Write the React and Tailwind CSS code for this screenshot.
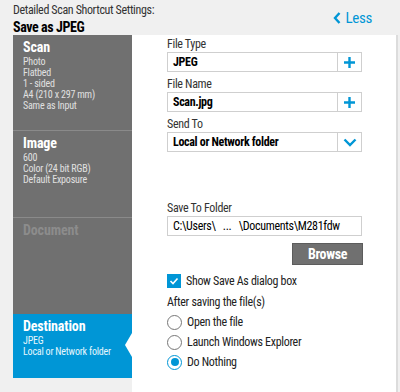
const font = { fontFamily: '"Roboto Condensed", "DejaVu Sans Condensed", sans-serif' };

const Plus = () => (
  <svg width="13" height="13" viewBox="0 0 13 13">
    <path d="M6.5 1v11M1 6.5h11" stroke="#0096d6" strokeWidth="2.4" />
  </svg>
);

const Chevron = () => (
  <svg width="14" height="9" viewBox="0 0 14 9">
    <path d="M1.5 1.5l5.5 5.5 5.5-5.5" fill="none" stroke="#0096d6" strokeWidth="2.4" />
  </svg>
);

const Field = ({ label, value, bold = true, icon, className = "" }) => (
  <div className={`flex flex-col ${className}`}>
    <div className="h-[16px] flex items-center text-[12px] text-[#333]">{label}</div>
    <div className="w-[195px] h-[20px] border border-[#cfcfcf] flex items-stretch bg-white">
      <div className={`flex-1 flex items-center px-[5px] text-[12px] text-black ${bold ? "font-bold" : ""}`}>{value}</div>
      {icon && (
        <div className="w-[24px] border-l border-[#cfcfcf] flex items-center justify-center">{icon}</div>
      )}
    </div>
  </div>
);

const Radio = ({ label, checked }) => (
  <div className="h-[20px] flex items-center gap-[5px]">
    <div className={`w-[15px] h-[15px] rounded-full border-[1.5px] flex items-center justify-center bg-white ${checked ? "border-[#0096d6]" : "border-[#777]"}`}>
      {checked && <div className="w-[8px] h-[8px] rounded-full bg-[#0096d6]" />}
    </div>
    <span className="text-[12px] text-[#222]">{label}</span>
  </div>
);

const Section = ({ title, items = [], h, muted, active, divider = true }) => (
  <div
    className={`relative flex flex-col pl-[10px] pt-[4px] ${active ? "bg-[#0096d6]" : "bg-[#707070]"} ${divider ? "border-b border-[#8a8a8a]" : ""}`}
    style={{ height: h }}
  >
    <div className={`text-[14px] font-bold leading-[17px] tracking-[-0.01em] ${muted ? "text-[#8c8c8c]" : "text-white"}`}>{title}</div>
    {items.map((t) => (
      <div key={t} className={`text-[10px] leading-[11px] tracking-[-0.02em] ${active ? "text-[#e6f6fd]" : "text-[#e0e0e0]"}`}>{t}</div>
    ))}
    {active && (
      <div className="absolute right-0 top-[19px] w-0 h-0 border-y-[12px] border-y-transparent border-r-[7px] border-r-white" />
    )}
  </div>
);

export default function App() {
  return (
    <div className="w-[400px] h-[392px] bg-[#f0f0f0] flex flex-col overflow-hidden tracking-[-0.02em]" style={font}>
      <div className="h-[35px] flex justify-between pl-[13px] pr-[28px]">
        <div className="flex flex-col pt-[3px]">
          <div className="text-[12px] leading-[15px] text-[#333] tracking-[-0.03em]">Detailed Scan Shortcut Settings:</div>
          <div className="text-[14px] leading-[19px] font-bold text-black tracking-[-0.03em]">Save as JPEG</div>
        </div>
        <div className="flex items-center gap-[4px] h-[22px] mt-[7px] text-[15px] text-[#0096d6]">
          <svg width="8" height="12" viewBox="0 0 8 12">
            <path d="M6.5 1L2 6l4.5 5" fill="none" stroke="#0096d6" strokeWidth="2.4" />
          </svg>
          Less
        </div>
      </div>
      <div className="flex flex-1 pl-[13px]">
        <div className="w-[119px] h-[343px] flex flex-col">
          <Section title="Scan" h={96} items={["Photo", "Flatbed", "1 - sided", "A4 (210 x 297 mm)", "Same as Input"]} />
          <Section title="Image" h={87} items={["600", "Color (24 bit RGB)", "Default Exposure"]} />
          <Section title="Document" h={96} muted divider={false} />
          <Section title="Destination" h={64} active divider={false} items={["JPEG", "Local or Network folder"]} />
        </div>
        <div className="w-[266px] bg-white border-r-2 border-[#dcdcdc] pl-[35px] pt-[1px] flex flex-col">
          <Field label="File Type" value="JPEG" icon={<Plus />} />
          <Field label="File Name" value="Scan.jpg" icon={<Plus />} className="mt-[4px]" />
          <Field label="Send To" value="Local or Network folder" icon={<Chevron />} className="mt-[4px]" />
          <Field
            label="Save To Folder"
            value={"C:\\Users\\\u00a0\u00a0\u00a0...\u00a0\u00a0\u00a0\\Documents\\M281fdw"}
            bold={false}
            className="mt-[48px]"
          />
          <div className="w-[196px] flex justify-end mt-[7px]">
            <div className="w-[71px] h-[22px] bg-[#707070] border border-[#5c5c5c] flex items-center justify-center text-[14px] font-bold text-white">
              Browse
            </div>
          </div>
          <div className="h-[20px] flex items-center gap-[5px] mt-[6px]">
            <div className="w-[14px] h-[14px] bg-[#0096d6] flex items-center justify-center">
              <svg width="10" height="8" viewBox="0 0 10 8">
                <path d="M1.5 4l2.5 2.5L8.5 1.5" fill="none" stroke="white" strokeWidth="1.6" />
              </svg>
            </div>
            <span className="text-[12px] text-[#222]">Show Save As dialog box</span>
          </div>
          <div className="h-[21px] flex items-center text-[12px] text-[#222]">After saving the file(s)</div>
          <Radio label="Open the file" />
          <Radio label="Launch Windows Explorer" />
          <Radio label="Do Nothing" checked />
        </div>
      </div>
    </div>
  );
}
